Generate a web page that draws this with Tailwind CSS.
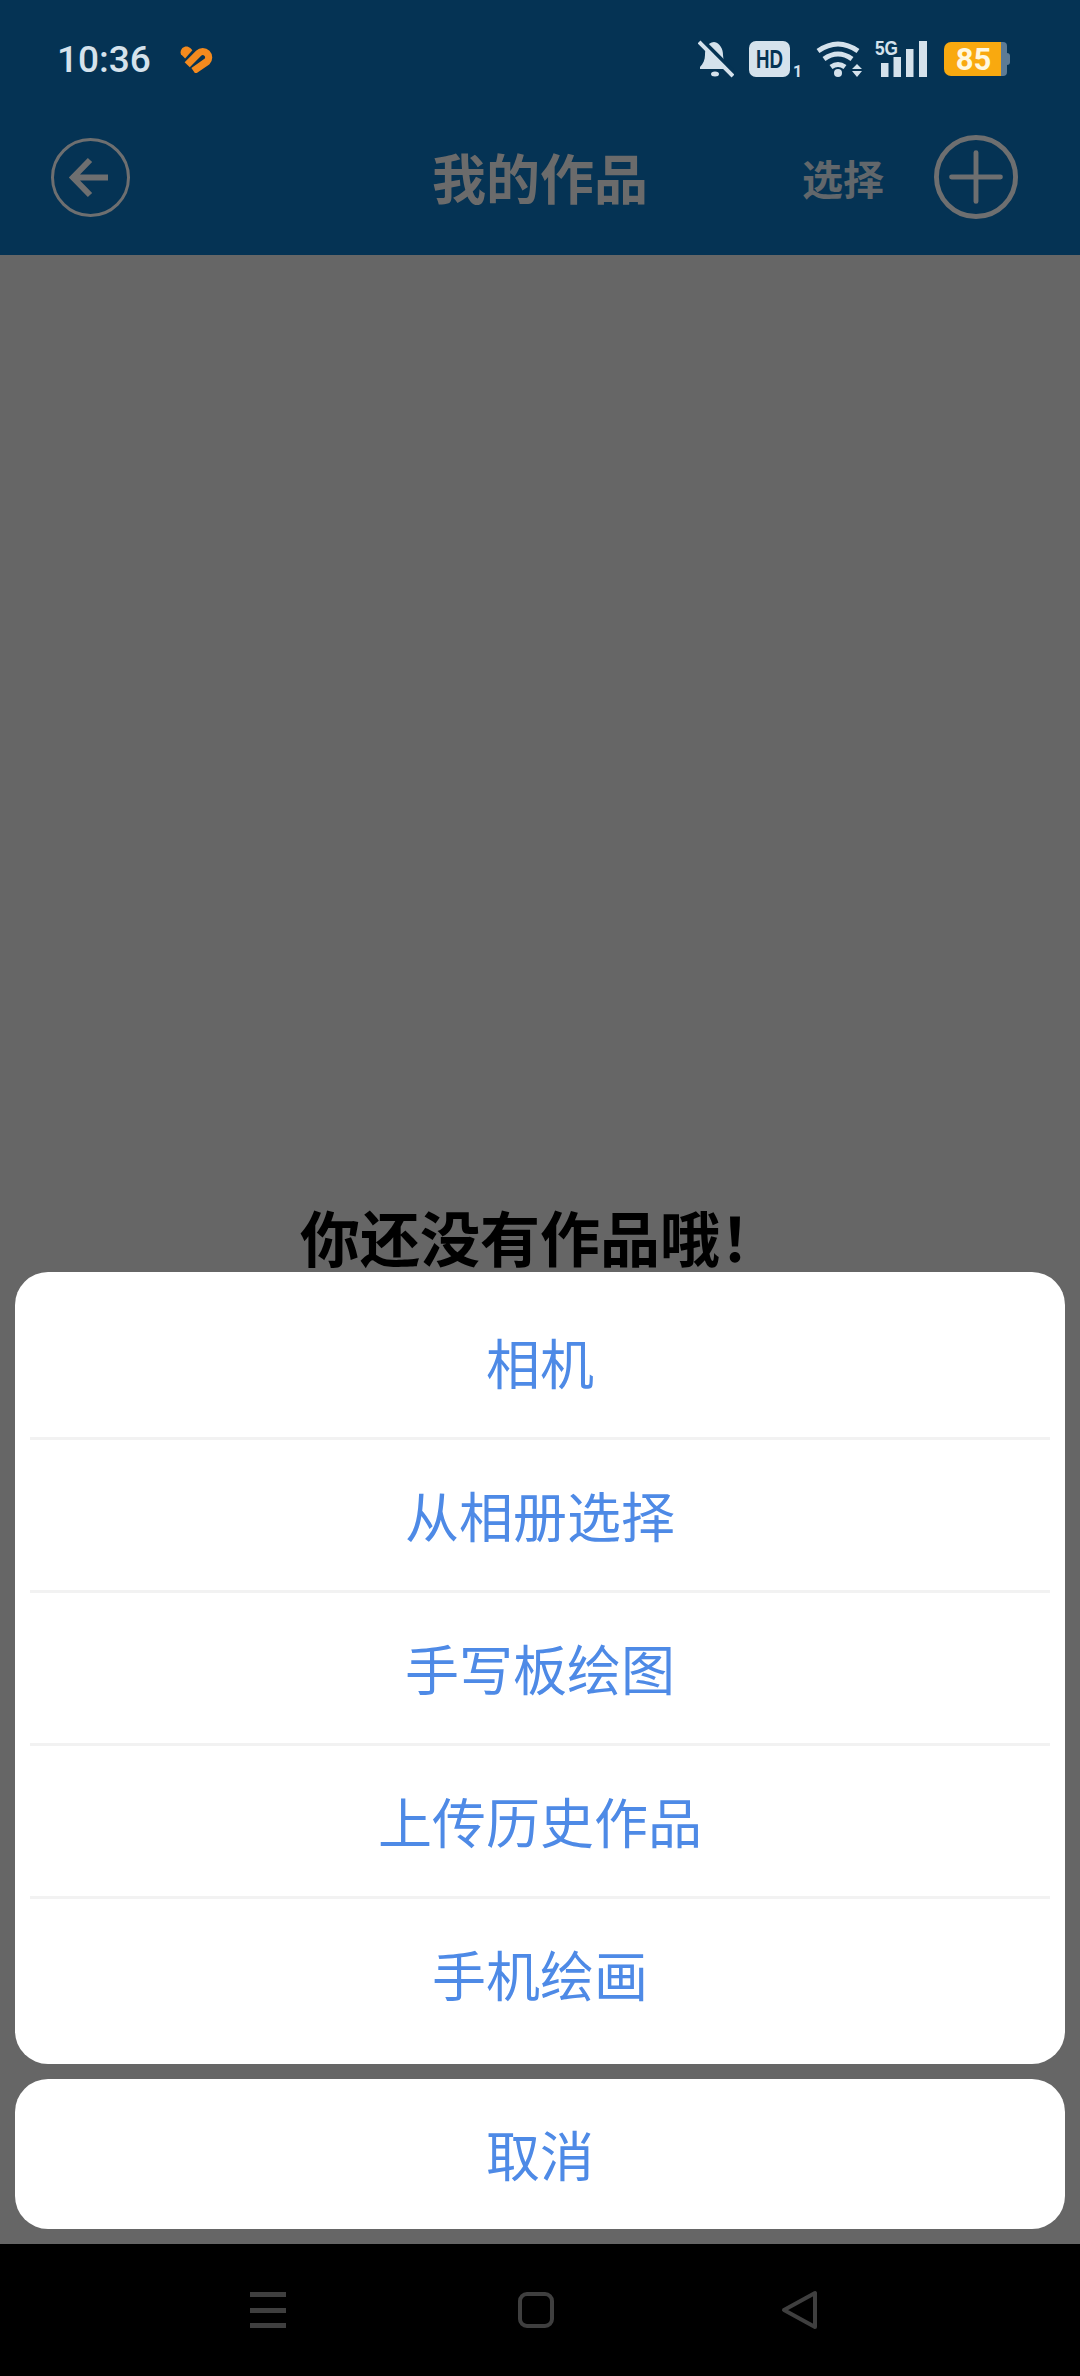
<!DOCTYPE html>
<html lang="zh-CN">
<head>
    <meta charset="UTF-8">
    <meta name="viewport" content="width=device-width, initial-scale=1.0">
    <title>我的作品</title>
    <script src="https://cdn.jsdelivr.net/npm/@tailwindcss/browser@4"></script>
</head>
<body class="bg-[#666666] font-['Noto_Sans_CJK_SC','Noto_Sans',sans-serif]">
<div class="w-[1080px] h-[2376px] flex flex-col overflow-hidden">

    <!-- Status bar + toolbar -->
    <header class="h-[255px] bg-[#053354] shrink-0">
        <div class="h-[118px] flex items-center justify-between pl-[57px] pr-[70px]">
            <div class="flex items-center gap-[27px]">
                <span class="font-['Roboto',sans-serif] font-medium text-[37px] leading-none text-[#d5e2ec]">10:36</span>
                <svg width="35" height="28" viewBox="0 0 32 27" fill="none">
                    <path d="M2 9C0 3 7-1 11 3L13 5 6 13Z" fill="#f48a1e"/>
                    <path d="M8 19 19 8a5.6 5.6 0 0 1 8 8L14 25" stroke="#f48a1e" stroke-width="7"/>
                </svg>
            </div>
            <div class="flex items-center text-[#d5e2ec]">
                <!-- muted bell -->
                <svg width="36" height="38" viewBox="0 0 36 38" fill="none" class="mr-[15px]">
                    <path d="M16 2C9 3 7 9 7 15 7 20 5 24 2 27V29H30V27C27 24 25 20 25 15 25 9 22 3 16 2Z" fill="#d5e2ec"/>
                    <ellipse cx="17" cy="34" rx="4" ry="2.5" fill="#d5e2ec"/>
                    <path d="M5 1 39 35" stroke="#053354" stroke-width="4"/>
                    <path d="M1 2 35 36" stroke="#d5e2ec" stroke-width="4"/>
                </svg>
                <!-- HD badge -->
                <svg width="54" height="44" viewBox="0 0 54 44" class="mr-[13px] -mb-[7px]">
                    <rect x="0" y="0" width="41" height="36" rx="7" fill="#d5e2ec"/>
                    <text x="7" y="27" font-family="Liberation Sans" font-weight="700" font-size="26" textLength="27" lengthAdjust="spacingAndGlyphs" fill="#053354">HD</text>
                    <text x="44" y="36" font-family="Roboto" font-weight="700" font-size="16" fill="#d5e2ec">1</text>
                </svg>
                <!-- wifi -->
                <svg width="47" height="38" viewBox="0 0 47 38" fill="none" class="mr-[12px]">
                    <path d="M2 11Q22-3 42 11" stroke="#d5e2ec" stroke-width="5"/>
                    <path d="M8 19Q22 9 36 19" stroke="#d5e2ec" stroke-width="5"/>
                    <path d="M15 27Q22 22 29 27" stroke="#d5e2ec" stroke-width="5"/>
                    <circle cx="22" cy="33" r="4" fill="#d5e2ec"/>
                    <path d="M36 29H46L41 24ZM36 31H46L41 37Z" fill="#d5e2ec"/>
                </svg>
                <!-- 5G + signal -->
                <svg width="54" height="46" viewBox="0 -8 54 46" class="mr-[15px] -mt-[8px]">
                    <text x="0" y="15" font-family="Liberation Sans" font-weight="700" font-size="20" textLength="23" lengthAdjust="spacingAndGlyphs" fill="#d5e2ec">5G</text>
                    <rect x="6" y="23" width="7.5" height="14" fill="#d5e2ec"/>
                    <rect x="18.5" y="17" width="7.5" height="20" fill="#d5e2ec"/>
                    <rect x="31" y="9" width="7.5" height="28" fill="#d5e2ec"/>
                    <rect x="44" y="1" width="8" height="36" fill="#d5e2ec"/>
                </svg>
                <!-- battery -->
                <div class="flex items-center">
                    <div class="w-[57px] h-[34px] bg-[#f9a90f] rounded-l-[7px] flex items-center justify-center font-['Roboto',sans-serif] font-bold text-[31px] leading-none text-[#fff8e0] pl-[2px]">85</div>
                    <div class="w-[6px] h-[34px] bg-[#5d7b95] rounded-r-[4px]"></div>
                    <div class="w-[3px] h-[12px] bg-[#5d7b95] rounded-r-[3px]"></div>
                </div>
            </div>
        </div>
        <div class="h-[137px] pb-[19px] grid grid-cols-[1fr_auto_1fr] items-center px-[51px]">
            <svg width="79" height="79" viewBox="0 0 79 79" fill="none" stroke="#6e6f70">
                <circle cx="39.5" cy="39.5" r="38" stroke-width="3"/>
                <path d="M57 39.5H24M39 22 22 39.5 39 57" stroke-width="6"/>
            </svg>
            <h1 class="text-[54px] leading-none font-bold text-[#6b6b6b]">我的作品</h1>
            <div class="flex items-center justify-end gap-[50px] mr-[11px]">
                <span class="text-[41px] leading-none font-bold text-[#62676b]">选择</span>
                <svg width="84" height="84" viewBox="0 0 86 86" fill="none" stroke="#6e6f70">
                    <circle cx="43" cy="43" r="40.5" stroke-width="5"/>
                    <path d="M18 43H68M43 18V68" stroke-width="5" stroke-linecap="round"/>
                </svg>
            </div>
        </div>
    </header>

    <!-- Empty state, dimmed by the sheet's backdrop -->
    <main class="relative flex-1 bg-[#666666] pt-[951px] text-center">
        <p class="text-[60px] leading-[60px] font-bold text-black">你还没有作品哦！</p>

        <!-- Action sheet -->
        <div class="absolute left-[15px] right-[15px] bottom-[15px] flex flex-col gap-[15px] text-[54px] leading-none text-[#4e8ae6]">
            <div class="bg-white rounded-[33px] py-[15px] px-[15px]">
                <div class="h-[153px] flex items-center justify-center border-b-[3px] border-[#f2f2f2]">相机</div>
                <div class="h-[153px] flex items-center justify-center border-b-[3px] border-[#f2f2f2]">从相册选择</div>
                <div class="h-[153px] flex items-center justify-center border-b-[3px] border-[#f2f2f2]">手写板绘图</div>
                <div class="h-[153px] flex items-center justify-center border-b-[3px] border-[#f2f2f2]">上传历史作品</div>
                <div class="h-[150px] flex items-center justify-center">手机绘画</div>
            </div>
            <div class="h-[150px] bg-white rounded-[33px] flex items-center justify-center">取消</div>
        </div>
    </main>

    <!-- Android nav bar -->
    <nav class="h-[132px] bg-black shrink-0 flex items-center pl-[250px]">
        <div class="w-[36px] h-[36px] flex flex-col justify-between">
            <div class="h-[5px] bg-[#3f3f3f]"></div>
            <div class="h-[5px] bg-[#3f3f3f]"></div>
            <div class="h-[5px] bg-[#3f3f3f]"></div>
        </div>
        <div class="w-[36px] h-[36px] ml-[232px] rounded-[9px] border-[4px] border-[#3f3f3f]"></div>
        <svg width="38" height="40" viewBox="0 0 38 40" fill="none" class="ml-[227px]">
            <path d="M34 3V37L3 20Z" stroke="#3f3f3f" stroke-width="4" stroke-linejoin="round"/>
        </svg>
    </nav>
</div>
</body>
</html>
